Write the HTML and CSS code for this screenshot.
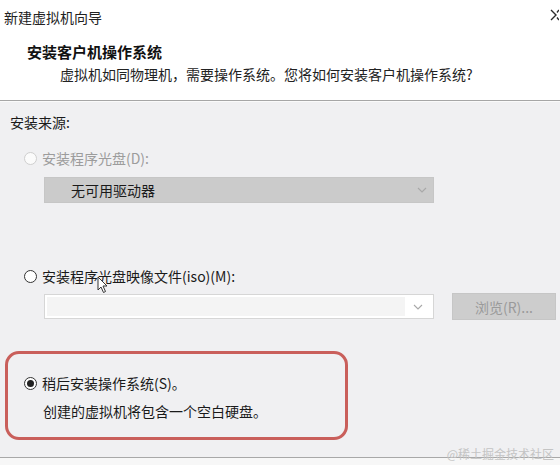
FILE: index.html
```html
<!DOCTYPE html>
<html lang="zh">
<head>
<meta charset="utf-8">
<title>新建虚拟机向导</title>
<link rel="stylesheet" href="styles.css">
</head>
<body>
<div class="window">
  <header class="header">
    <div class="titlebar">
      <span class="title">新建虚拟机向导</span>
      <svg class="close" width="9" height="12" viewBox="0 0 9 12"><path d="M1 1 L6 6 L1 11 M9 1 L7 3.5 M9 11 L7 8.5" stroke="#2a2a2a" stroke-width="1.4" fill="none"/></svg>
    </div>
    <h1 class="heading">安装客户机操作系统</h1>
    <p class="subtitle">虚拟机如同物理机，需要操作系统。您将如何安装客户机操作系统?</p>
  </header>
  <main class="content">
    <div class="section-label">安装来源:</div>

    <label class="radio-row disabled">
      <span class="radio"></span>
      <span>安装程序光盘(D):</span>
    </label>
    <div class="select disabled-select">
      <span class="select-text">无可用驱动器</span>
      <svg class="chev" width="10" height="6" viewBox="0 0 10 6"><path d="M1 1 L5 5 L9 1" stroke="#a8a8a8" stroke-width="1.1" fill="none"/></svg>
    </div>

    <label class="radio-row iso-row">
      <span class="radio"></span>
      <span>安装程序光盘映像文件(iso)(M):</span>
      <svg class="cursor" width="12" height="18" viewBox="0 0 12 18"><path d="M1 1 L1 14 L4 11 L6.5 16.5 L8.5 15.5 L6 10 L10 10 Z" fill="#fff" stroke="#333" stroke-width="1"/></svg>
    </label>
    <div class="file-row">
      <div class="combo">
        <div class="combo-field"></div>
        <div class="combo-btn">
          <svg width="10" height="6" viewBox="0 0 10 6"><path d="M1 1 L5 5 L9 1" stroke="#a8a8a8" stroke-width="1.1" fill="none"/></svg>
        </div>
      </div>
      <button class="browse" disabled>浏览(R)...</button>
    </div>

    <div class="highlight">
      <label class="radio-row in-box">
        <span class="radio checked"></span>
        <span>稍后安装操作系统(S)。</span>
      </label>
      <p class="note">创建的虚拟机将包含一个空白硬盘。</p>
    </div>
  </main>
  <footer class="footer"></footer>
  <div class="watermark">@稀土掘金技术社区</div>
</div>
</body>
</html>
```

FILE: styles.css
```css
* { box-sizing: border-box; }
html, body {
  margin: 0;
  padding: 0;
  width: 560px;
  height: 465px;
  overflow: hidden;
  background: #f0f0f2;
}
body {
  font-family: "Noto Sans CJK SC", "Noto Sans", "Liberation Sans", sans-serif;
  font-size: 14px;
  color: #1a1a1a;
}
.window {
  position: relative;
  width: 560px;
  height: 465px;
  display: flex;
  flex-direction: column;
  overflow: hidden;
}
.header {
  background: #ffffff;
  height: 101px;
  border-bottom: 1px solid #a6a6a6;
  box-shadow: 0 1px 0 #fafafa;
}
.titlebar {
  display: flex;
  align-items: center;
  justify-content: space-between;
  height: 20px;
  margin-top: 7px;
  padding: 0 1px 0 4px;
}
.title {
  line-height: 20px;
  color: #222;
}
.close {
  display: block;
  margin-top: -5px;
  flex: none;
}
.heading {
  margin: 15px 0 0 27px;
  font-size: 15px;
  font-weight: bold;
  line-height: 20px;
  color: #111;
}
.subtitle {
  margin: 2px 0 0 60px;
  line-height: 20px;
  color: #222;
}
.content {
  display: flex;
  flex-direction: column;
  flex: 1;
}
.section-label {
  margin: 11px 0 0 10px;
  line-height: 20px;
}
.radio-row {
  position: relative;
  display: flex;
  align-items: center;
  gap: 5px;
  height: 20px;
  line-height: 20px;
  padding-left: 24px;
}
.radio-row.disabled {
  margin-top: 16px;
  color: #9c9c9c;
}
.radio {
  width: 13px;
  height: 13px;
  border-radius: 50%;
  border: 1px solid #333;
  background: #fff;
  position: relative;
  flex: none;
}
.disabled .radio {
  border-color: #cfcfcf;
  background: #fbfbfb;
}
.radio.checked::after {
  content: "";
  position: absolute;
  left: 2px;
  top: 2px;
  width: 7px;
  height: 7px;
  border-radius: 50%;
  background: #222;
}
.select {
  margin: 9px 0 0 44px;
  width: 390px;
  height: 26px;
  display: flex;
  align-items: center;
  justify-content: space-between;
  padding: 0 6px 0 26px;
}
.disabled-select {
  background: #cbcbcb;
  border: 1px solid #c6c6c6;
}
.select-text { color: #1a1a1a; }
.iso-row { margin-top: 63px; }
.cursor {
  position: absolute;
  left: 97px;
  top: 10px;
}
.file-row {
  display: flex;
  align-items: center;
  margin: 7px 0 0 44px;
  height: 27px;
}
.combo {
  width: 390px;
  height: 25px;
  display: flex;
  background: #fff;
  border: 1px solid #d6d6d6;
  padding: 2px;
}
.combo-field {
  flex: 1;
  background: #f4f4f4;
}
.combo-btn {
  width: 26px;
  display: flex;
  align-items: center;
  justify-content: center;
}
.browse {
  margin-left: 18px;
  width: 104px;
  height: 27px;
  background: #cdcdcd;
  border: 1px solid #c6c6c6;
  color: #9a9a9a;
  font-family: inherit;
  font-size: 14px;
  padding: 0;
}
.highlight {
  margin: 31px 0 0 5px;
  width: 343px;
  height: 89px;
  border: 3px solid #c95f5b;
  border-radius: 14px;
  padding-top: 19px;
}
.in-box { padding-left: 16px; }
.note {
  margin: 8px 0 0 35px;
  line-height: 20px;
}
.footer {
  height: 8px;
  border-top: 1px solid #a8a8a8;
  background: #f7f7f7;
}
.watermark {
  position: absolute;
  right: 6px;
  bottom: 4px;
  font-size: 12px;
  line-height: 14px;
  color: #c4c4c4;
}
```
